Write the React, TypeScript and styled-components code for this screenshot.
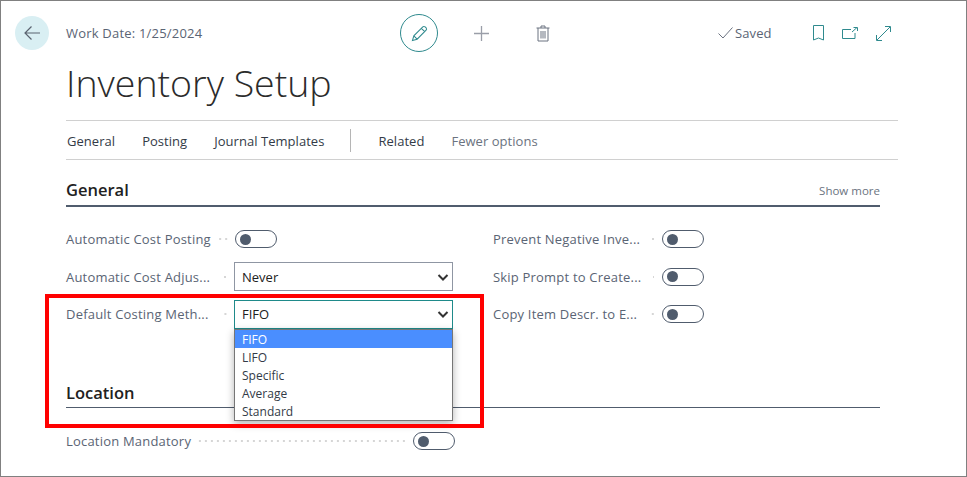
import React from "react";
import styled, { createGlobalStyle } from "styled-components";

const GlobalStyle = createGlobalStyle`
  html, body {
    margin: 0;
    padding: 0;
    background: #fff;
    font-family: "Open Sans", "Noto Sans", sans-serif;
  }
`;

const Frame = styled.div`
  position: relative;
  box-sizing: border-box;
  width: 967px;
  height: 477px;
  border: 1px solid #808080;
  overflow: hidden;
`;

const Header = styled.header`
  display: flex;
  align-items: center;
  height: 38px;
  margin-top: 13px;
  padding-left: 14px;
`;

const BackButton = styled.div`
  display: flex;
  align-items: center;
  justify-content: center;
  width: 34px;
  height: 34px;
  border-radius: 50%;
  background: #d9eff3;
  color: #5b6470;
`;

const WorkDate = styled.span`
  width: 334px;
  margin-left: 17px;
  font-size: 13px;
  letter-spacing: 0.2px;
  white-space: nowrap;
  color: #5a6474;
`;

const CenterActions = styled.div`
  display: flex;
  align-items: center;
  width: 318px;
`;

const EditCircle = styled.div`
  display: flex;
  align-items: center;
  justify-content: center;
  box-sizing: border-box;
  width: 38px;
  height: 38px;
  border: 1px solid #2f8a8e;
  border-radius: 50%;
  color: #2f8a8e;
`;

const PlainAction = styled.div<{ $gap: number }>`
  display: flex;
  margin-left: ${(p) => p.$gap}px;
  color: #9a9ea8;
`;

const SavedState = styled.div`
  display: flex;
  align-items: center;
  gap: 2px;
  width: 95px;
  font-size: 13px;
  letter-spacing: 0.1px;
  color: #5a6474;
`;

const RightActions = styled.div`
  display: flex;
  align-items: center;
  gap: 18px;
  color: #2f8a8e;
`;

const Content = styled.main`
  margin-left: 65px;
  width: 832px;
`;

const Title = styled.h1`
  margin: 6px 0 0;
  font-size: 37.5px;
  line-height: 49px;
  font-weight: 300;
  color: #2b2b2b;
`;

const TabBar = styled.nav`
  display: flex;
  align-items: center;
  box-sizing: border-box;
  height: 40px;
  margin-top: 13px;
  padding-top: 1px;
  border-top: 1px solid #d0d0d0;
  border-bottom: 1px solid #d0d0d0;
`;

const Tab = styled.span<{ $muted?: boolean }>`
  margin-left: 1px;
  margin-right: 26px;
  font-size: 13px;
  letter-spacing: 0.04px;
  color: ${(p) => (p.$muted ? "#6b7380" : "#333b47")};
`;

const TabDivider = styled.span`
  width: 1px;
  height: 23px;
  margin-right: 26px;
  background: #b5b5b5;
`;

const Section = styled.section`
  width: 814px;
`;

const GeneralSection = styled(Section)`
  margin-top: 15px;
`;

const SectionHead = styled.div<{ $thin?: boolean }>`
  display: flex;
  align-items: center;
  justify-content: space-between;
  box-sizing: content-box;
  height: 28px;
  padding: ${(p) => (p.$thin ? "2px 0 0" : "0 0 2px")};
  border-bottom: ${(p) => (p.$thin ? "1px" : "2px")} solid #505c6d;
`;

const SectionTitle = styled.h2`
  margin: 0;
  font-size: 16.5px;
  font-weight: 600;
  color: #212121;
`;

const ShowMore = styled.span`
  margin-top: 2px;
  font-size: 11.5px;
  color: #6b7380;
`;

const FieldGrid = styled.div`
  display: grid;
  grid-template-columns: 387px 387px;
  column-gap: 40px;
  margin-top: 13.5px;
`;

const Column = styled.div`
  display: flex;
  flex-direction: column;
`;

const Row = styled.div`
  display: flex;
  align-items: center;
  height: 37.5px;
`;

const LabelCell = styled.div<{ $w: number }>`
  display: flex;
  align-items: center;
  flex: none;
  width: ${(p) => p.$w}px;
`;

const Label = styled.span`
  flex: none;
  white-space: nowrap;
  font-size: 13px;
  letter-spacing: 0.2px;
  color: #5a6474;
`;

const Leader = styled.span<{ $long?: boolean }>`
  flex: 1;
  height: 2px;
  margin: 0 6px 0 ${(p) => (p.$long ? 6 : 12)}px;
  background-image: radial-gradient(circle, #d6d6d6 1px, transparent 1px);
  background-position: right center;
  background-size: 6px 2px;
`;

const ToggleTrack = styled.div`
  display: flex;
  align-items: center;
  flex: none;
  box-sizing: border-box;
  width: 42px;
  height: 18px;
  padding-left: 4px;
  border: 1px solid #505c6d;
  border-radius: 9px;
`;

const ToggleKnob = styled.div`
  width: 11px;
  height: 11px;
  border-radius: 50%;
  background: #505c6d;
`;

const SelectBox = styled.div<{ $focus?: boolean }>`
  display: flex;
  align-items: center;
  justify-content: space-between;
  flex: none;
  box-sizing: border-box;
  width: 219px;
  height: 29px;
  padding: 0 3px 0 7px;
  border: 1px solid ${(p) => (p.$focus ? "#1f8a8a" : "#8f96a3")};
  font-size: 13px;
  color: #212121;
`;

const SelectWrap = styled.div`
  position: relative;
  flex: none;
  width: 219px;
`;

const OptionList = styled.div`
  position: absolute;
  z-index: 2;
  top: 29px;
  left: 0;
  box-sizing: border-box;
  width: 219px;
  border: 1px solid #767676;
  background: #fff;
  box-shadow: 0 3px 8px rgba(0, 0, 0, 0.3);
`;

const Option = styled.div<{ $active?: boolean }>`
  height: 18px;
  padding-left: 7px;
  font-size: 12px;
  line-height: 20px;
  color: ${(p) => (p.$active ? "#fff" : "#333b47")};
  background: ${(p) => (p.$active ? "#4a8eff" : "#fff")};
`;

const LocationSection = styled(Section)`
  margin-top: 43.5px;
`;

const LocationRow = styled(Row)`
  margin-top: 15px;
`;

const RedHighlight = styled.div`
  position: absolute;
  z-index: 3;
  left: 44px;
  top: 293px;
  box-sizing: border-box;
  width: 439px;
  height: 134px;
  border: 4px solid #ff0000;
  pointer-events: none;
`;

const Chevron = () => (
  <svg width="12" height="12" viewBox="0 0 12 12" fill="none" stroke="#333" strokeWidth="2">
    <path d="M1.5 4 L6 8.5 L10.5 4" />
  </svg>
);

const Toggle = () => (
  <ToggleTrack>
    <ToggleKnob />
  </ToggleTrack>
);

const options = ["FIFO", "LIFO", "Specific", "Average", "Standard"];

const rightFields = [
  "Prevent Negative Inve...",
  "Skip Prompt to Create...",
  "Copy Item Descr. to E...",
];

export default function App() {
  return (
    <Frame>
      <GlobalStyle />
      <Header>
        <BackButton>
          <svg width="16" height="14" viewBox="0 0 16 14" fill="none" stroke="currentColor" strokeWidth="1.2">
            <path d="M16 7 H1 M7.5 0.5 L1 7 L7.5 13.5" />
          </svg>
        </BackButton>
        <WorkDate>Work Date: 1/25/2024</WorkDate>
        <CenterActions>
          <EditCircle>
            <svg width="17" height="17" viewBox="0 0 18 18" fill="none" stroke="currentColor" strokeWidth="1.1">
              <path d="M1.5 16.5 L3 11.5 L12.5 2 Q13.5 1 15 2 L16 3 Q17 4.5 16 5.5 L6.5 15 Z M3 11.5 L6.5 15 M11 3.5 L14.5 7" />
            </svg>
          </EditCircle>
          <PlainAction $gap={35}>
            <svg width="17" height="17" viewBox="0 0 17 17" fill="none" stroke="currentColor" strokeWidth="1.3">
              <path d="M8.5 1 V16 M1 8.5 H16" />
            </svg>
          </PlainAction>
          <PlainAction $gap={46}>
            <svg width="14" height="17" viewBox="0 0 14 17" fill="none" stroke="#6b7280" strokeWidth="1">
              <path d="M0.5 3 H13.5 M5 3 V1 H9 V3 M2 3 V16 H12 V3 M5 6 V13.5 M7 6 V13.5 M9 6 V13.5" />
            </svg>
          </PlainAction>
        </CenterActions>
        <SavedState>
          <svg width="15" height="12" viewBox="0 0 15 12" fill="none" stroke="#6b7280" strokeWidth="1">
            <path d="M0.5 6.5 L5 11 L14.5 0.5" />
          </svg>
          Saved
        </SavedState>
        <RightActions>
          <svg width="11" height="16" viewBox="0 0 11 16" fill="none" stroke="currentColor" strokeWidth="1">
            <path d="M0.5 0.5 H10.5 V15 L5.5 13 L0.5 15 Z" />
          </svg>
          <svg width="16" height="12" viewBox="0 0 16 12" fill="none" stroke="currentColor" strokeWidth="1">
            <path d="M9 2.5 H0.5 V11.5 H13 V6 M10 5 L15 0.5 M11.5 0.5 H15.5 V4" />
          </svg>
          <svg width="15" height="15" viewBox="0 0 15 15" fill="none" stroke="currentColor" strokeWidth="1">
            <path d="M1 14 L14 1 M9 0.5 H14.5 V6 M0.5 9 V14.5 H6" />
          </svg>
        </RightActions>
      </Header>
      <Content>
        <Title>Inventory Setup</Title>
        <TabBar>
          <Tab>General</Tab>
          <Tab>Posting</Tab>
          <Tab>Journal Templates</Tab>
          <TabDivider />
          <Tab>Related</Tab>
          <Tab $muted>Fewer options</Tab>
        </TabBar>
        <GeneralSection>
          <SectionHead>
            <SectionTitle>General</SectionTitle>
            <ShowMore>Show more</ShowMore>
          </SectionHead>
          <FieldGrid>
            <Column>
              <Row>
                <LabelCell $w={169}>
                  <Label>Automatic Cost Posting</Label>
                  <Leader $long />
                </LabelCell>
                <Toggle />
              </Row>
              <Row>
                <LabelCell $w={168}>
                  <Label>Automatic Cost Adjus...</Label>
                  <Leader />
                </LabelCell>
                <SelectBox>
                  Never
                  <Chevron />
                </SelectBox>
              </Row>
              <Row>
                <LabelCell $w={168}>
                  <Label>Default Costing Meth...</Label>
                  <Leader />
                </LabelCell>
                <SelectWrap>
                  <SelectBox $focus>
                    FIFO
                    <Chevron />
                  </SelectBox>
                  <OptionList>
                    {options.map((name, i) => (
                      <Option key={name} $active={i === 0}>
                        {name}
                      </Option>
                    ))}
                  </OptionList>
                </SelectWrap>
              </Row>
            </Column>
            <Column>
              {rightFields.map((name) => (
                <Row key={name}>
                  <LabelCell $w={169}>
                    <Label>{name}</Label>
                    <Leader />
                  </LabelCell>
                  <Toggle />
                </Row>
              ))}
            </Column>
          </FieldGrid>
        </GeneralSection>
        <LocationSection>
          <SectionHead $thin>
            <SectionTitle>Location</SectionTitle>
          </SectionHead>
          <LocationRow>
            <LabelCell $w={347}>
              <Label>Location Mandatory</Label>
              <Leader $long />
            </LabelCell>
            <Toggle />
          </LocationRow>
        </LocationSection>
      </Content>
      <RedHighlight />
    </Frame>
  );
}
